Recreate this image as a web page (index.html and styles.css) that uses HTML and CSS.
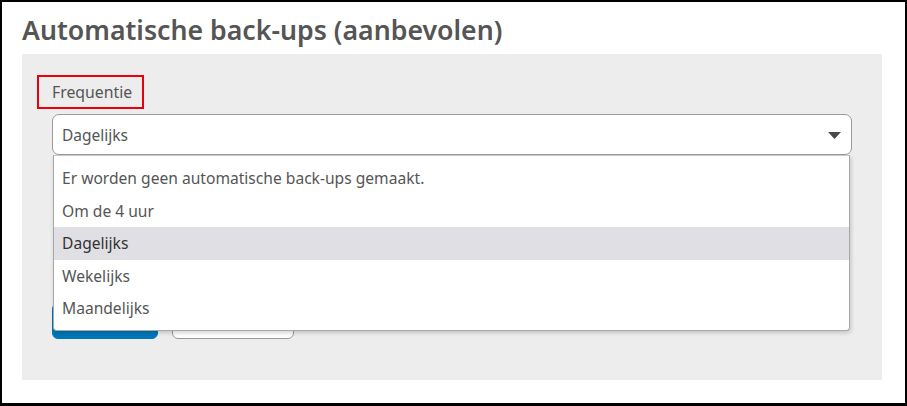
FILE: index.html
```html
<!DOCTYPE html>
<html lang="nl">
<head>
<meta charset="utf-8">
<title>Automatische back-ups</title>
<link rel="stylesheet" href="styles.css">
</head>
<body>
<div class="frame">
  <h1 class="title">Automatische back-ups (aanbevolen)</h1>
  <section class="panel">
    <div class="label-box"><span class="label">Frequentie</span></div>
    <div class="select-wrap">
      <div class="select">
        <span class="select-value">Dagelijks</span>
        <svg class="caret" width="13" height="7" viewBox="0 0 13 7"><path d="M0 0H13L6.5 7Z" fill="#4a4a4a"/></svg>
      </div>
      <ul class="menu">
        <li class="option">Er worden geen automatische back-ups gemaakt.</li>
        <li class="option">Om de 4 uur</li>
        <li class="option selected">Dagelijks</li>
        <li class="option">Wekelijks</li>
        <li class="option">Maandelijks</li>
      </ul>
    </div>
    <div class="actions">
      <button class="btn btn-primary" aria-label="Opslaan"></button>
      <button class="btn btn-secondary" aria-label="Annuleren"></button>
    </div>
  </section>
</div>
</body>
</html>
```

FILE: styles.css
```css
* { box-sizing: border-box; }
html, body { margin: 0; padding: 0; background: #fff; }
body { font-family: "Noto Sans", "Open Sans", sans-serif; color: #555; }

.frame {
  width: 907px;
  height: 406px;
  border: 2px solid #000;
  border-bottom-width: 3px;
  background: #fff;
  overflow: hidden;
}

.title {
  margin: 0;
  padding: 9px 0 0 20px;
  height: 52px;
  font-size: 26.7px;
  font-weight: 600;
  line-height: 38px;
  color: #555;
}

.panel {
  margin-left: 20px;
  width: 860px;
  height: 326px;
  background: #ededed;
  padding: 21px 30px 0 30px;
}

.label-box {
  display: inline-block;
  margin-left: -15px;
  height: 34px;
  width: 107px;
  border: 2px solid #e8000b;
  padding-left: 13px;
  line-height: 30px;
  font-size: 15.8px;
  color: #555;
}

.select-wrap {
  position: relative;
  margin-top: 5px;
  width: 800px;
}

.select {
  height: 41px;
  background: #fff;
  border: 1px solid #9b9b9b;
  border-radius: 7px;
  display: flex;
  align-items: center;
  justify-content: space-between;
  padding: 0 10px 0 9px;
  font-size: 15.5px;
  color: #555;
}
.select-value { line-height: 20px; }
.caret { display: block; margin-top: 2px; }

.menu {
  position: absolute;
  top: 100%;
  left: 1px;
  right: 2px;
  margin: 0;
  padding: 6px 0 5px;
  list-style: none;
  background: #fff;
  border: 1px solid #a8a8a8;
  border-top-color: #c8c8c8;
  border-radius: 0 0 4px 4px;
  box-shadow: 1px 2px 4px rgba(0,0,0,0.18);
  z-index: 2;
}
.option {
  height: 32.6px;
  line-height: 32.6px;
  padding-left: 8px;
  font-size: 15.6px;
  color: #555;
  white-space: nowrap;
}
.option.selected {
  background: #e0dfe4;
  color: #333;
}

.actions {
  display: flex;
  gap: 14px;
  margin-top: 148px;
}
.btn {
  height: 36px;
  border-radius: 6px;
  font-family: inherit;
  font-size: 15px;
}
.btn-primary {
  width: 106px;
  background: #0076b9;
  border: 1px solid #0076b9;
}
.btn-secondary {
  width: 122px;
  background: #fff;
  border: 1px solid #9b9b9b;
}
```
